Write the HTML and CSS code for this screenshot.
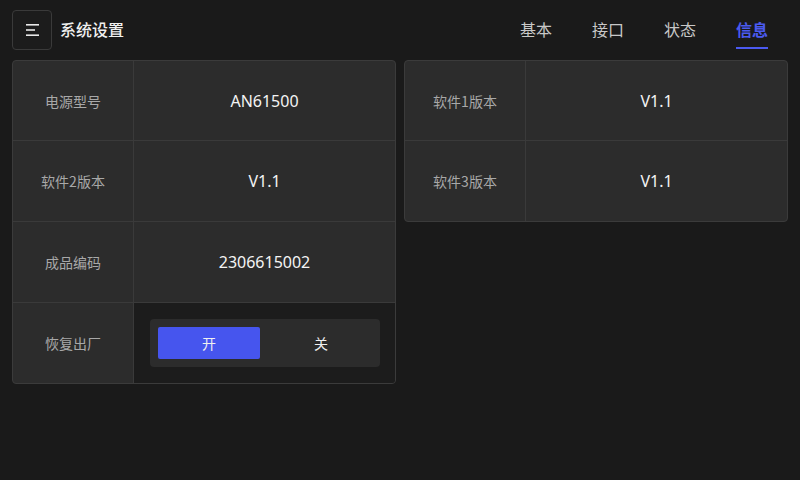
FILE: index.html
```html
<!DOCTYPE html>
<html lang="zh-CN">
<head>
<meta charset="utf-8">
<title>系统设置</title>
<link rel="stylesheet" href="styles.css">
</head>
<body>
<div class="app">
  <header class="header">
    <button class="menu-btn" aria-label="菜单">
      <svg width="14" height="12" viewBox="0 0 14 12">
        <rect x="0" y="0" width="13" height="1.6" fill="#e8e8e8"/>
        <rect x="0" y="5.2" width="9" height="1.6" fill="#e8e8e8"/>
        <rect x="0" y="10.4" width="13" height="1.6" fill="#e8e8e8"/>
      </svg>
    </button>
    <h1 class="title">系统设置</h1>
    <nav class="tabs">
      <span class="tab">基本</span>
      <span class="tab">接口</span>
      <span class="tab">状态</span>
      <span class="tab active">信息</span>
    </nav>
  </header>
  <main class="main">
    <section class="card">
      <div class="row"><div class="label">电源型号</div><div class="value">AN61500</div></div>
      <div class="row"><div class="label">软件2版本</div><div class="value">V1.1</div></div>
      <div class="row"><div class="label">成品编码</div><div class="value">2306615002</div></div>
      <div class="row last"><div class="label">恢复出厂</div>
        <div class="value dark">
          <div class="toggle">
            <span class="opt on">开</span>
            <span class="opt">关</span>
          </div>
        </div>
      </div>
    </section>
    <section class="card">
      <div class="row"><div class="label">软件1版本</div><div class="value">V1.1</div></div>
      <div class="row last"><div class="label">软件3版本</div><div class="value">V1.1</div></div>
    </section>
  </main>
</div>
</body>
</html>
```
FILE: styles.css
```css
* { box-sizing: border-box; }
html, body {
  margin: 0;
  padding: 0;
  width: 800px;
  height: 480px;
  background: #1a1a1a;
  overflow: hidden;
  font-family: "Noto Sans", "Noto Sans CJK SC", sans-serif;
  color: #eeeeee;
}
.app { width: 800px; height: 480px; }
.header {
  height: 60px;
  display: flex;
  align-items: flex-start;
  padding: 10px 32px 0 12px;
}
.menu-btn {
  width: 40px;
  height: 40px;
  border: 1px solid #3a3a3a;
  border-radius: 4px;
  background: #1c1c1c;
  display: flex;
  align-items: center;
  justify-content: center;
  padding: 0;
  margin: 0;
}
.menu-btn svg { display: block; margin-left: 1px; }
.title {
  margin: 7px 0 0 8px;
  font-family: "Noto Sans CJK SC", sans-serif;
  font-size: 16px;
  font-weight: 500;
  line-height: 24px;
  color: #f0f0f0;
}
.tabs {
  margin-left: auto;
  display: flex;
  gap: 40px;
  margin-top: 7px;
}
.tab {
  font-family: "Noto Sans CJK SC", sans-serif;
  font-size: 16px;
  line-height: 24px;
  color: #c8c8c8;
  padding-bottom: 6px;
  border-bottom: 2px solid transparent;
}
.tab.active {
  color: #4b5af0;
  font-weight: 700;
  border-bottom-color: #4b5af0;
}
.main {
  display: grid;
  grid-template-columns: 1fr 1fr;
  gap: 8px;
  padding: 0 12px;
  align-items: start;
}
.card {
  border: 1px solid #3b3b3b;
  border-radius: 4px;
  overflow: hidden;
  background: #2c2c2c;
}
.row {
  display: grid;
  grid-template-columns: 121px 1fr;
  height: 81px;
  border-bottom: 1px solid #3a3a3a;
}
.row:first-child { height: 80px; }
.row.last { border-bottom: none; height: 80px; }
.label {
  border-right: 1px solid #3a3a3a;
  display: flex;
  align-items: center;
  justify-content: center;
  font-family: "Noto Sans CJK SC", sans-serif;
  font-size: 14px;
  color: #a8a8a8;
}
.value {
  display: flex;
  align-items: center;
  justify-content: center;
  font-size: 16px;
  font-weight: 400;
  color: #f4f4f4;
}
.value.dark {
  background: #1c1c1c;
  justify-content: flex-start;
  padding: 0 15px 0 16px;
}
.toggle {
  width: 100%;
  height: 48px;
  background: #2c2c2c;
  border-radius: 4px;
  padding: 8px;
  display: grid;
  grid-template-columns: 1fr 1fr;
  gap: 10px;
}
.opt {
  display: flex;
  align-items: center;
  justify-content: center;
  border-radius: 2px;
  font-family: "Noto Sans CJK SC", sans-serif;
  font-size: 14px;
  font-weight: 400;
  color: #f0f0f0;
}
.opt.on { background: #4655ee; }
```
